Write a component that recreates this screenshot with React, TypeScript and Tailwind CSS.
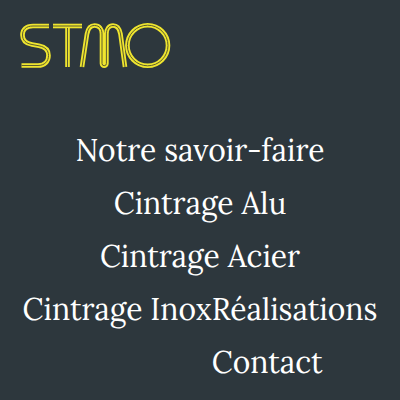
const tubes = [
  "M49 26H33C26 26 22.500 29.500 22.500 35C22.500 40.500 26 43.500 32 44.500L39 45.800C45.500 47 48.500 50.500 48.500 55.500C48.500 61.500 44.500 65.500 38 65.500H21.500",
  "M53 26H82",
  "M67.500 28V67",
  "M82 67L87 34C88 28.500 90 25.500 94.500 25.500C99.500 25.500 102 29 102 34V63.500A2.200 2.200 0 0 0 106.400 63.500V34C106.400 29 109 25.500 113 25.500C117.500 25.500 119.500 28.500 120.500 34L125 67",
  "M168 45.500A20.300 20.300 0 1 1 127.400 45.500A20.300 20.300 0 1 1 168 45.500Z",
];

function Logo() {
  return (
    <svg viewBox="20 22 152 48" className="h-12 w-38" fill="none" role="img" aria-label="STMO">
      {tubes.map((d) => (
        <g key={d}>
          <path d={d} stroke="#efe52f" strokeWidth="4.6" />
          <path d={d} stroke="#5c5c2c" strokeWidth="1" />
        </g>
      ))}
    </svg>
  );
}

function MenuLink({ label }: { label: string }) {
  return (
    <a href="#" className="block whitespace-nowrap">
      {label}
    </a>
  );
}

export default function App() {
  return (
    <div className="min-h-screen bg-[#2d373d] text-white">
      <header className="px-5 pt-[22px]">
        <a href="#" className="inline-block align-top">
          <Logo />
        </a>
      </header>
      <nav className="mt-[54px] flex flex-col items-center pb-2 font-['Lora','Liberation_Serif',serif] text-[30px] leading-[53px]">
        <MenuLink label="Notre savoir-faire" />
        <MenuLink label="Cintrage Alu" />
        <MenuLink label="Cintrage Acier" />
        <div className="flex items-start justify-center">
          <MenuLink label="Cintrage Inox" />
          <div>
            <MenuLink label="Réalisations" />
            <MenuLink label="Contact" />
          </div>
        </div>
      </nav>
    </div>
  );
}
